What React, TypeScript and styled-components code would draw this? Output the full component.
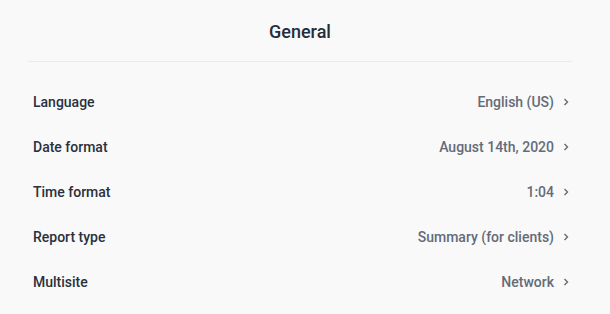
import React from "react";
import styled, { createGlobalStyle } from "styled-components";

const GlobalStyle = createGlobalStyle`
  html, body {
    margin: 0;
    padding: 0;
    background: #f9f9f9;
    font-family: Roboto, "Liberation Sans", sans-serif;
  }
`;

const Panel = styled.div`
  width: 610px;
  height: 314px;
  box-sizing: border-box;
  padding: 0 38px 0 28px;
  background: #f9f9f9;
`;

const Header = styled.div`
  padding: 21px 0 18px;
  border-bottom: 1px solid #ebebeb;
  text-align: center;
`;

const Title = styled.h2`
  margin: 0;
  font-size: 18px;
  line-height: 22px;
  font-weight: 500;
  color: #252d3a;
`;

const List = styled.div`
  padding-top: 17px;
  display: flex;
  flex-direction: column;
`;

const Row = styled.div`
  height: 45px;
  display: flex;
  align-items: center;
  justify-content: space-between;
  padding: 0 3px 0 5px;
  cursor: pointer;
`;

const Label = styled.span`
  font-size: 14px;
  font-weight: 500;
  color: #2a303d;
`;

const Value = styled.span`
  display: flex;
  align-items: center;
  gap: 9px;
  font-size: 14px;
  font-weight: 500;
  color: #646b78;
`;

const Chevron = () => (
  <svg width="6" height="8" viewBox="0 0 6 8" fill="none">
    <polyline points="1.5,1 4.5,4 1.5,7" stroke="#646b78" strokeWidth="1.4" />
  </svg>
);

const settings = [
  { label: "Language", value: "English (US)" },
  { label: "Date format", value: "August 14th, 2020" },
  { label: "Time format", value: "1:04" },
  { label: "Report type", value: "Summary (for clients)" },
  { label: "Multisite", value: "Network" },
];

export default function App() {
  return (
    <>
      <GlobalStyle />
      <Panel>
        <Header>
          <Title>General</Title>
        </Header>
        <List>
          {settings.map((s) => (
            <Row key={s.label}>
              <Label>{s.label}</Label>
              <Value>
                {s.value}
                <Chevron />
              </Value>
            </Row>
          ))}
        </List>
      </Panel>
    </>
  );
}
